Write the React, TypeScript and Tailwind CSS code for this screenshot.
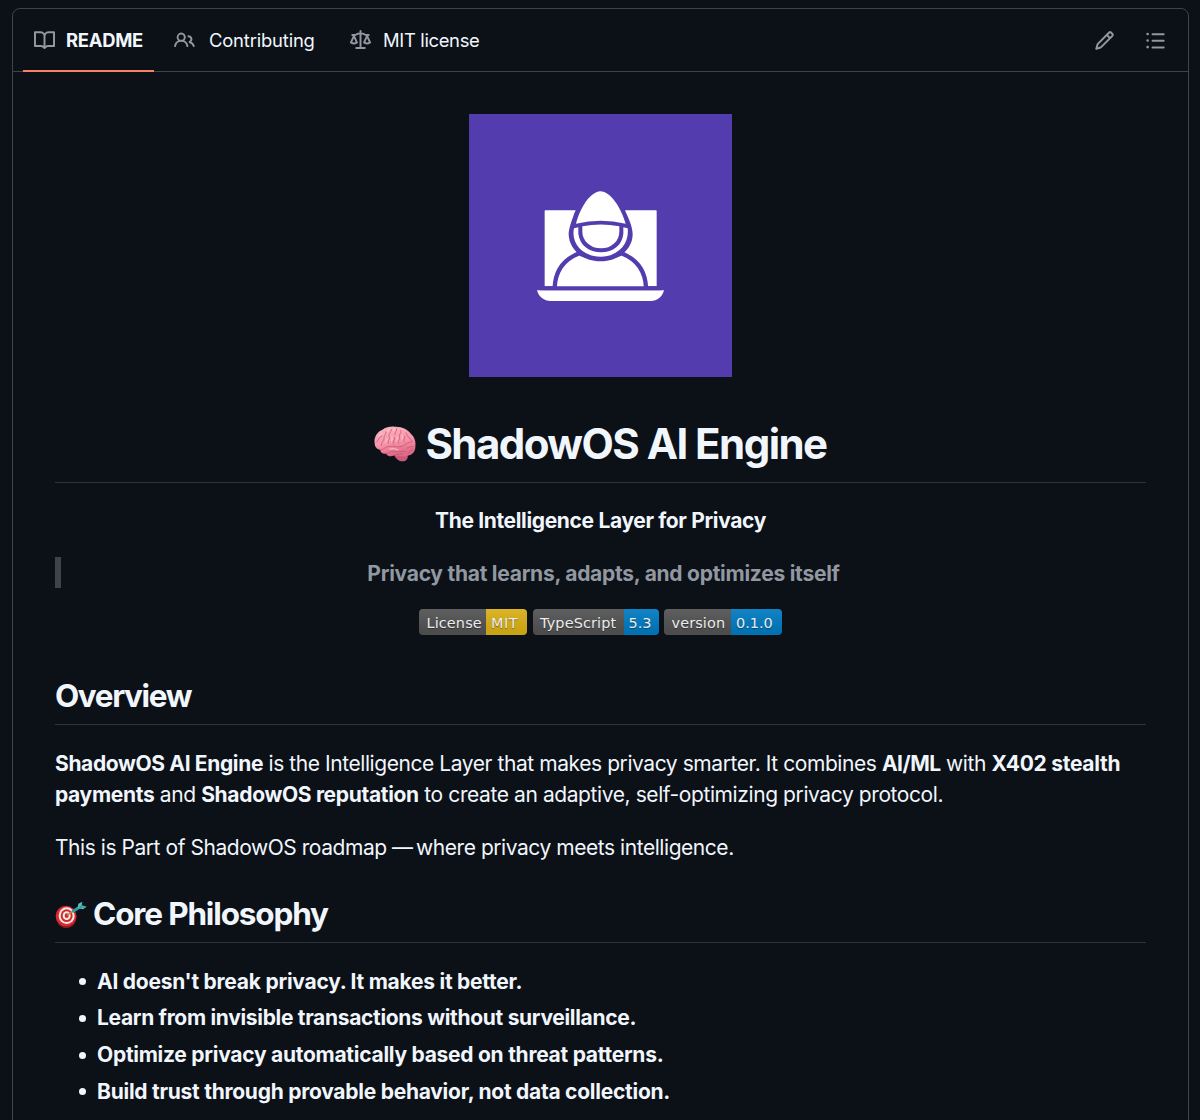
import React from 'react';

const icons = {
  book: 'M0 1.75A.75.75 0 0 1 .75 1h4.253c1.227 0 2.317.59 3 1.501A3.743 3.743 0 0 1 11.006 1h4.245a.75.75 0 0 1 .75.75v10.5a.75.75 0 0 1-.75.75h-4.507a2.25 2.25 0 0 0-1.591.659l-.622.621a.75.75 0 0 1-1.06 0l-.622-.621A2.25 2.25 0 0 0 5.258 13H.75a.75.75 0 0 1-.75-.75Zm7.251 10.324.004-5.073-.002-2.253A2.25 2.25 0 0 0 5.003 2.5H1.5v9h3.757a3.75 3.75 0 0 1 1.994.574ZM8.755 4.75l-.004 7.322a3.752 3.752 0 0 1 1.992-.572H14.5v-9h-3.495a2.25 2.25 0 0 0-2.25 2.25Z',
  people:
    'M2 5.5a3.5 3.5 0 1 1 5.898 2.549 5.508 5.508 0 0 1 3.034 4.084.75.75 0 1 1-1.482.235 4 4 0 0 0-7.9 0 .75.75 0 0 1-1.482-.236A5.507 5.507 0 0 1 3.102 8.05 3.493 3.493 0 0 1 2 5.5ZM11 4a3.001 3.001 0 0 1 2.22 5.018 5.01 5.01 0 0 1 2.56 3.012.749.749 0 0 1-.885.954.752.752 0 0 1-.549-.514 3.507 3.507 0 0 0-2.522-2.372.75.75 0 0 1-.574-.73v-.352a.75.75 0 0 1 .416-.672A1.5 1.5 0 0 0 11 5.5.75.75 0 0 1 11 4Zm-5.5-.5a2 2 0 1 0-.001 3.999A2 2 0 0 0 5.5 3.5Z',
  law: 'M8.75.75V2h.985c.304 0 .603.08.867.231l1.29.736c.038.022.08.033.124.033h2.234a.75.75 0 0 1 0 1.5h-.427l2.111 4.692a.75.75 0 0 1-.154.838l-.53-.53.529.531-.001.002-.002.002-.006.006-.006.005-.01.01-.045.04c-.21.176-.441.327-.686.45C14.556 10.78 13.88 11 13 11a4.498 4.498 0 0 1-2.023-.454 3.544 3.544 0 0 1-.686-.45l-.045-.04-.016-.015-.006-.006-.004-.004v-.001a.75.75 0 0 1-.154-.838L12.178 4.5h-.162c-.305 0-.604-.079-.868-.231l-1.29-.736a.245.245 0 0 0-.124-.033H8.75V13h2.5a.75.75 0 0 1 0 1.5h-6.5a.75.75 0 0 1 0-1.5h2.5V3.5h-.984a.245.245 0 0 0-.124.033l-1.289.737c-.265.15-.564.23-.869.23h-.162l2.112 4.692a.75.75 0 0 1-.154.838l-.53-.53.529.531-.001.002-.002.002-.006.006-.016.015-.045.04c-.21.176-.441.327-.686.45C4.556 10.78 3.88 11 3 11a4.498 4.498 0 0 1-2.023-.454 3.544 3.544 0 0 1-.686-.45l-.045-.04-.016-.015-.006-.006-.004-.004v-.001a.75.75 0 0 1-.154-.838L2.178 4.5H1.75a.75.75 0 0 1 0-1.5h2.234a.249.249 0 0 0 .125-.033l1.288-.737c.265-.15.564-.23.869-.23h.984V.75a.75.75 0 0 1 1.5 0Zm2.945 8.477c.285.135.718.273 1.305.273s1.02-.138 1.305-.273L13 6.327Zm-10 0c.285.135.718.273 1.305.273s1.02-.138 1.305-.273L3 6.327Z',
  pencil:
    'M11.013 1.427a1.75 1.75 0 0 1 2.474 0l1.086 1.086a1.75 1.75 0 0 1 0 2.474l-8.61 8.61c-.21.21-.47.364-.756.445l-3.251.93a.75.75 0 0 1-.927-.928l.929-3.25c.081-.286.235-.547.445-.758l8.61-8.61Zm.176 4.823L9.75 4.81l-6.286 6.287a.253.253 0 0 0-.064.108l-.558 1.953 1.953-.558a.253.253 0 0 0 .108-.064Zm1.238-3.763a.25.25 0 0 0-.354 0L10.811 3.75l1.439 1.44 1.263-1.263a.25.25 0 0 0 0-.354Z',
  list: 'M5.75 2.5h8.5a.75.75 0 0 1 0 1.5h-8.5a.75.75 0 0 1 0-1.5Zm0 5h8.5a.75.75 0 0 1 0 1.5h-8.5a.75.75 0 0 1 0-1.5Zm0 5h8.5a.75.75 0 0 1 0 1.5h-8.5a.75.75 0 0 1 0-1.5ZM2 14a1 1 0 1 1 0-2 1 1 0 0 1 0 2Zm1-6a1 1 0 1 1-2 0 1 1 0 0 1 2 0ZM2 4a1 1 0 1 1 0-2 1 1 0 0 1 0 2Z',
};

const Icon: React.FC<{ name: keyof typeof icons }> = ({ name }) => (
  <svg
    viewBox="0 0 16 16"
    className="w-[21px] h-[21px] shrink-0 fill-[#9198a1]"
  >
    <path d={icons[name]} />
  </svg>
);

const Logo: React.FC = () => (
  <svg viewBox="0 0 789 789" className="w-[263px] h-[263px] bg-[#533dae]">
    <g transform="translate(153 199)" fill="#fff">
      <path d="M74 92q0-2 2-2h332q2 0 2 2v226H74z" />
      <path d="M51 330h381c-5 20-20 32-40 32H92c-20 0-36-12-41-32z" />
      <path
        d="M104 322c2-48 25-84 74-103q63 30 126 0c49 19 72 55 74 103"
        stroke="#533dae"
        strokeWidth="13"
      />
      <path d="M60 318h364v12H60z" fill="#533dae" />
      <path
        d="M241 22C205 22 174 68 161 105C151 132 146 148 146 163C148 208 190 243 242 243C293 243 337 208 338 163C338 145 332 127 321 103C307 66 277 22 241 22z"
        fill="#533dae"
      />
      <path d="M241 33C209 35 181 83 168 130Q242 112 317 130C303 83 273 34 241 33z" />
      <path d="M162 144L175 141V160C179 194 207 216 243 216C279 216 307 194 310 160V141L323 144C329 190 293 229 242 229C190 229 152 190 162 144z" />
      <path d="M187 138Q242 127 298 138V154C298 182 274 204 243 204C212 204 187 182 187 154z" />
    </g>
  </svg>
);

const Brain: React.FC = () => (
  <svg viewBox="0 0 126 108" className="w-[42px] h-[36px] shrink-0">
    <defs>
      <linearGradient id="brain" x1="0" y1="0" x2="0.3" y2="1">
        <stop offset="0" stopColor="#fbb9c4" />
        <stop offset="0.6" stopColor="#f696aa" />
        <stop offset="1" stopColor="#e06a88" />
      </linearGradient>
    </defs>
    <path
      d="M61 86C64 98 74 106 86 106C97 106 103 98 101 86z"
      fill="#c95c74"
    />
    <path
      d="M2 52C-1 37 8 18 24 12C36 3 50 1 62 2C84 1 102 10 112 25C122 34 126 48 124 60C125 75 116 87 101 89C83 93 70 89 61 88C51 93 41 91 36 83C26 84 19 80 19 72C8 70 2 62 2 52z"
      fill="url(#brain)"
    />
    <g fill="none" stroke="#c65370" strokeWidth="2.2" strokeLinecap="round">
      <path d="M19 72C30 72 34 61 45 61C60 59 70 66 84 61C96 57 101 46 112 49" />
      <path d="M8 48C15 42 14 32 23 30M22 58C20 48 31 47 30 37C29 28 37 27 36 17" />
      <path d="M43 53C38 45 50 40 45 31C42 23 52 21 52 10M59 55C53 48 65 43 61 34" />
      <path d="M63 26C60 18 70 17 68 8M74 52C69 44 80 40 76 31C74 25 82 24 81 14" />
      <path d="M91 48C85 41 97 36 91 29M95 20C101 25 97 31 106 35C111 38 106 42 115 45" />
      <path d="M36 83C47 82 49 74 60 77C73 81 82 73 94 76M99 66C107 65 110 59 118 62M61 88C68 84 78 86 87 83M103 82C105 75 113 77 116 70" />
    </g>
    <g
      fill="none"
      stroke="#ffd4da"
      strokeWidth="3"
      strokeLinecap="round"
      opacity="0.8"
    >
      <path d="M14 32q4-9 10-11M35 49q4-4 4-11M53 44q3-5 1-11M68 45q4-6 2-12M84 39q3-5 1-10M47 69q15-3 25 2M40 17q4-7 8-8M60 14q-2-4 1-7" />
    </g>
  </svg>
);

const Dart: React.FC = () => (
  <svg viewBox="0 0 96 84" className="w-[32px] h-[28px] shrink-0">
    <ellipse cx="34" cy="49" rx="31" ry="32" fill="#8f171d" />
    <ellipse cx="33" cy="45" rx="31" ry="31" fill="#d92b30" />
    <ellipse cx="35" cy="44" rx="24" ry="25" fill="#f4ece9" />
    <ellipse cx="35" cy="44" rx="18" ry="19" fill="#cf2a30" />
    <ellipse cx="35" cy="44" rx="12" ry="13" fill="#f4ece9" />
    <ellipse cx="35" cy="44" rx="6" ry="7" fill="#cf2a30" />
    <path d="M36 43L57 29" stroke="#c98530" strokeWidth="4" />
    <path d="M52 32L78 16" stroke="#3298a3" strokeWidth="9" />
    <path d="M68 21L70 8L82 2L80 13L95 17L84 25z" fill="#55bfc5" />
    <path d="M72 19L83 13M76 19L90 18" stroke="#237c89" strokeWidth="2" />
  </svg>
);

const badges = [
  {
    label: 'License',
    value: 'MIT',
    labelStyle: 'w-[67px]',
    valueStyle: 'w-[41px] tracking-[0.5px] bg-[#dfb317]',
  },
  {
    label: 'TypeScript',
    value: '5.3',
    labelStyle: 'w-[91px]',
    valueStyle: 'w-[35px] bg-[#007ec6]',
  },
  {
    label: 'version',
    value: '0.1.0',
    labelStyle: 'w-[67px]',
    valueStyle: 'w-[51px] bg-[#007ec6]',
  },
];

const philosophy = [
  {
    text: "AI doesn't break privacy. It makes it better.",
    tracking: 'tracking-[-0.25px]',
  },
  {
    text: 'Learn from invisible transactions without surveillance.',
    tracking: 'tracking-[-0.32px]',
  },
  {
    text: 'Optimize privacy automatically based on threat patterns.',
    tracking: 'tracking-[-0.27px]',
  },
  {
    text: 'Build trust through provable behavior, not data collection.',
    tracking: 'tracking-[-0.26px]',
  },
];

const Header: React.FC = () => (
  <header className="h-[63px] flex items-stretch border-b border-[#3d444d] pl-[10px] pr-[22px] text-[18.4px]">
    <div className="relative w-[131px] flex items-center pl-[11px] gap-[11px] font-[650]">
      <Icon name="book" />
      <span className="pt-[2px] tracking-[-0.27px]">README</span>
      <div className="absolute left-0 -bottom-px w-full h-[2.5px] bg-[#f78166]" />
    </div>
    <div className="flex items-center ml-5 gap-[14px]">
      <Icon name="people" />
      <span className="pt-[2px] tracking-[-0.17px] w-[106px]">
        Contributing
      </span>
    </div>
    <div className="flex items-center ml-[35px] gap-[12px]">
      <Icon name="law" />
      <span className="pt-[2px] tracking-[-0.33px]">MIT license</span>
    </div>
    <div className="ml-auto flex items-center gap-[30px]">
      <Icon name="pencil" />
      <Icon name="list" />
    </div>
  </header>
);

const App: React.FC = () => {
  return (
    <div className="h-[1120px] overflow-hidden bg-[#0c1017] text-[#f0f6fc] pt-2 pl-3 pr-[11px] font-['Inter',sans-serif]">
      <div className="h-[1130px] border border-[#3d444d] rounded-t-lg">
        <Header />
        <article className="px-[42px] pt-[42px] text-[21px] leading-[31.5px]">
          <div className="flex justify-center">
            <Logo />
          </div>
          <h1 className="mt-10 h-[66px] border-b border-[#3d444d]/70 flex justify-center gap-[9px] text-[42px] leading-[53px] font-[650]">
            <span className="pt-[9px]">
              <Brain />
            </span>
            <span className="tracking-[-1.55px] whitespace-nowrap">
              ShadowOS AI Engine
            </span>
          </h1>
          <p className="mt-[22px] text-center font-[650] tracking-[-0.35px]">
            The Intelligence Layer for Privacy
          </p>
          <blockquote className="mt-[20px] h-[31px] border-l-[6px] border-[#3d444d] text-center leading-[33px] font-[650] text-[#9198a1] tracking-[-0.26px]">
            Privacy that learns, adapts, and optimizes itself
          </blockquote>
          <div className="mt-[21.5px] h-[26px] flex justify-center gap-[5.5px] font-['DejaVu_Sans',sans-serif] text-[14.45px] leading-[28px] text-white [text-shadow:0_1px_1px_rgba(1,1,1,0.4)]">
            {badges.map((badge) => (
              <div
                key={badge.label}
                className="relative flex rounded-[4px] overflow-hidden"
              >
                <div
                  className={`bg-[#555] pl-[7.5px] tracking-[0.12px] ${badge.labelStyle}`}
                >
                  {badge.label}
                </div>
                <div className={`pl-[5px] ${badge.valueStyle}`}>
                  {badge.value}
                </div>
                <div className="absolute inset-0 bg-linear-to-b from-[#bbb]/10 to-black/10" />
              </div>
            ))}
          </div>
          <h2 className="mt-10 h-[50px] border-b border-[#3d444d]/70 text-[31.5px] leading-[41px] font-[650] tracking-[-1.4px]">
            Overview
          </h2>
          <p className="mt-[22.5px] whitespace-nowrap">
            <span className="block tracking-[-0.43px]">
              <b className="font-[650] tracking-[-0.36px]">
                ShadowOS AI Engine
              </b>{' '}
              is the Intelligence Layer that makes privacy smarter. It combines{' '}
              <b className="font-[650] tracking-[-0.5px]">AI/ML</b> with{' '}
              <b className="font-[650] tracking-[-0.28px]">X402 stealth</b>
            </span>
            <span className="block tracking-[-0.41px]">
              <b className="font-[650] tracking-[-0.33px]">payments</b> and{' '}
              <b className="font-[650] tracking-[-0.32px]">
                ShadowOS reputation
              </b>{' '}
              to create an adaptive, self-optimizing privacy protocol.
            </span>
          </p>
          <p className="mt-[21px] tracking-[-0.45px]">
            This is Part of ShadowOS roadmap{' '}
            <span className="tracking-[-2.5px]">—</span> where privacy meets
            intelligence.
          </p>
          <h2 className="mt-[30px] h-[50px] border-b border-[#3d444d]/70 flex gap-[6px] text-[31.5px] leading-[41px] font-[650] tracking-[-1.15px]">
            <span className="pt-[8px]">
              <Dart />
            </span>
            Core Philosophy
          </h2>
          <ul className="mt-[22.5px] flex flex-col gap-[5.4px] font-[650]">
            {philosophy.map((item) => (
              <li key={item.text} className="flex items-center pl-[24px]">
                <span className="w-[7px] h-[7px] mr-[11px] rounded-full bg-[#f0f6fc]" />
                <span className={item.tracking}>{item.text}</span>
              </li>
            ))}
          </ul>
        </article>
      </div>
    </div>
  );
};

export default App;
